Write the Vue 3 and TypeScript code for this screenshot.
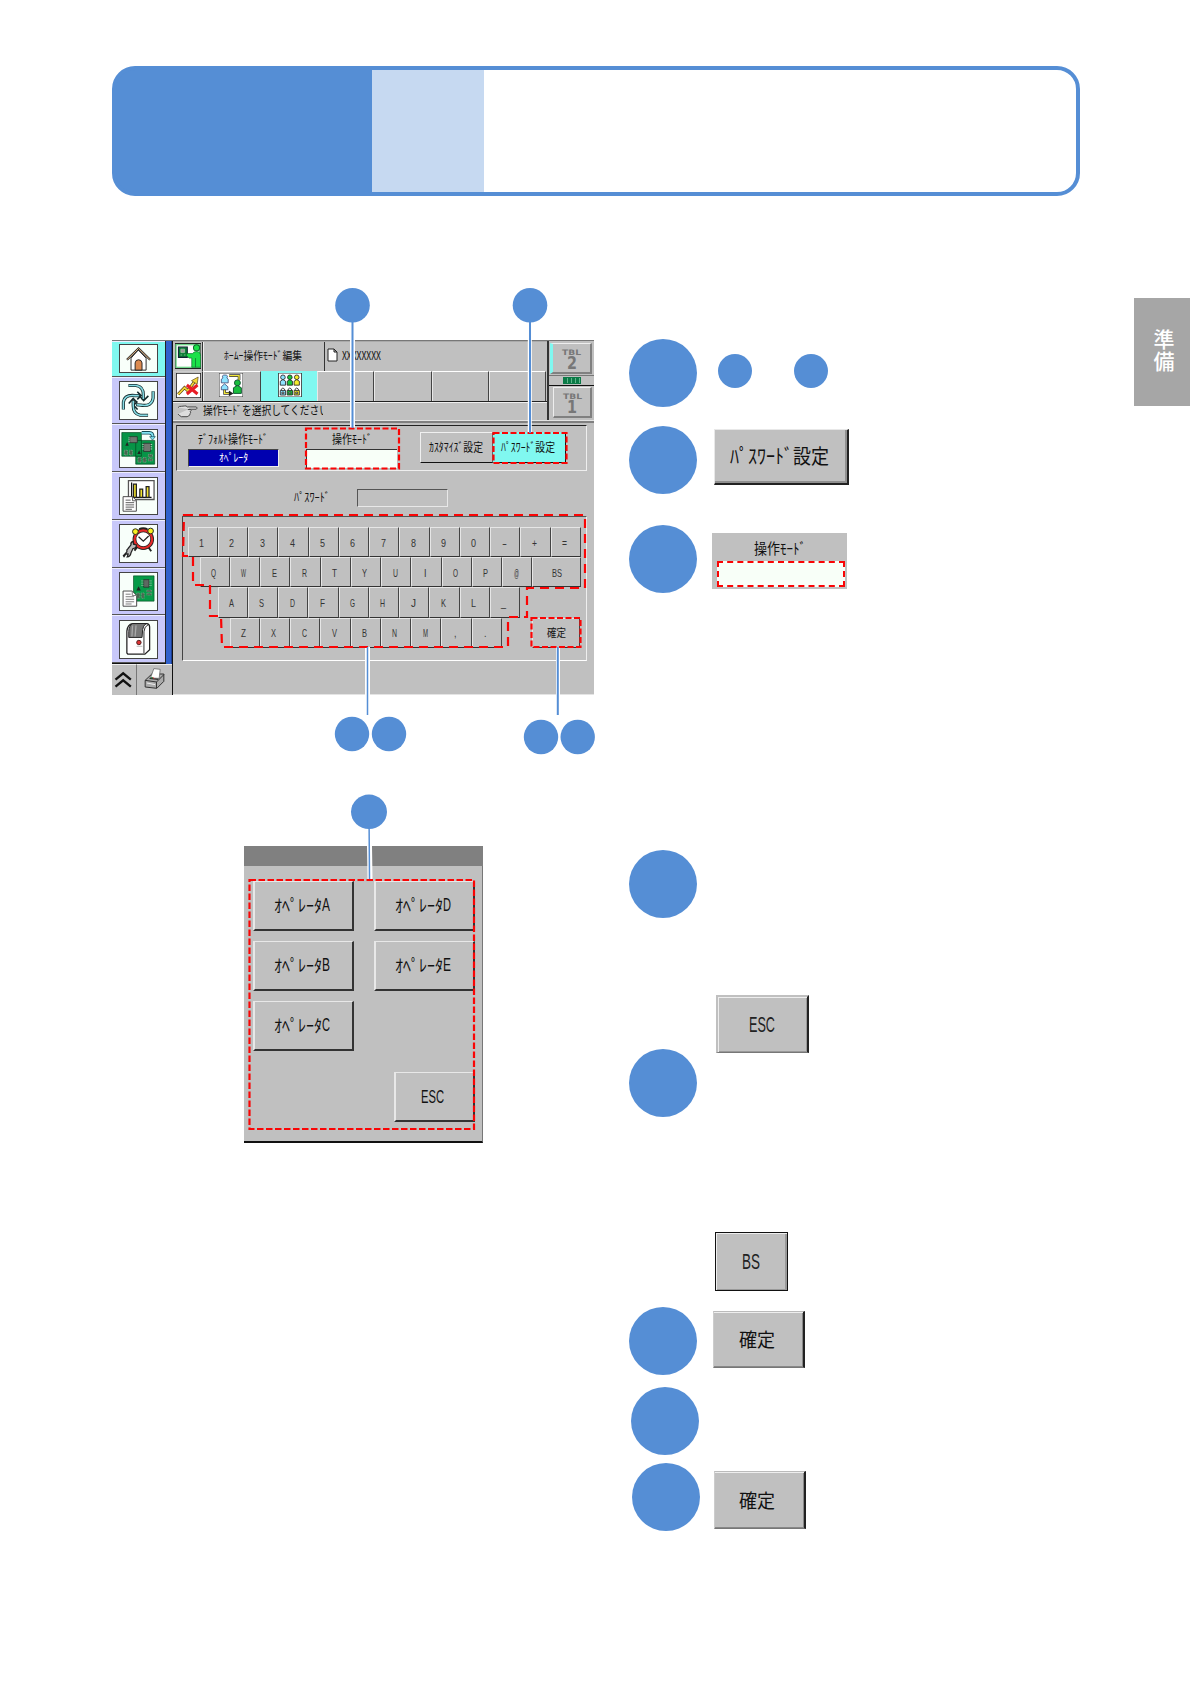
<script setup lang="ts">
import { h } from 'vue'

interface LabelProps {
  text: string
  w: number
  size: number
  color?: string
  family?: string
  weight?: number
}

const JP = '"Noto Sans CJK JP", sans-serif'

const Label = (p: LabelProps) =>
  h('svg', { width: p.w, height: p.size, style: 'display:block;overflow:visible;flex:none' }, [
    h('text', {
      x: 0,
      y: p.size * 0.87,
      textLength: p.w,
      lengthAdjust: 'spacingAndGlyphs',
      'font-size': p.size,
      'font-family': p.family ?? JP,
      'font-weight': p.weight ?? 400,
      fill: p.color ?? '#111',
    }, p.text),
  ])
Label.props = ['text', 'w', 'size', 'color', 'family', 'weight']

const narrow: Record<string, number> = { BS: 10, ',': 2.5, '.': 2.5, I: 2.5 }
const rows: { id: string; keys: string[] }[] = [
  { id: 'r1', keys: ['1', '2', '3', '4', '5', '6', '7', '8', '9', '0', '-', '+', '='] },
  { id: 'r2', keys: ['Q', 'W', 'E', 'R', 'T', 'Y', 'U', 'I', 'O', 'P', '@', 'BS'] },
  { id: 'r3', keys: ['A', 'S', 'D', 'F', 'G', 'H', 'J', 'K', 'L', '_'] },
  { id: 'r4', keys: ['Z', 'X', 'C', 'V', 'B', 'N', 'M', ',', '.'] },
]
const operators = ['A', 'D', 'B', 'E', 'C']
const people = [
  { x: 545, c: '#8fe3ff' },
  { x: 566, c: '#17c53a' },
  { x: 587, c: '#f4ec2c' },
]
</script>

<template>
  <div class="page">
    <header class="banner">
      <div class="banner-b"></div>
    </header>

    <div class="content">
      <section class="figures">
        <div class="screen">
          <div class="side">
            <nav class="menu">
              <div class="cells">
                <div class="cell on first">
                  <svg class="ico short" viewBox="58 42 114 86">
                    <path d="M92 84v38h48V84L115 58z" fill="#fff" stroke="#222" stroke-width="3" />
                    <path d="M79 89l37-36 37 36" fill="none" stroke="#222" stroke-width="7" />
                    <path d="M80 88l36-35 36 35" fill="none" stroke="#f2c08c" stroke-width="3" />
                    <path d="M105 122V99q1-10 11-10t11 10v23z" fill="#dc8a50" stroke="#222" stroke-width="3" />
                  </svg>
                </div>
                <div class="cell">
                  <svg class="ico" viewBox="58 153 114 116">
                    <g fill="none" stroke-linejoin="miter">
                      <g stroke="#12292b" stroke-width="10">
                        <path d="M84 164h24q24 3 23 31v14" /><path d="M162 182v22q-4 28-39 22l-15-1" />
                        <path d="M146 258h-25q-22-5-22-30v-17" /><path d="M68 240v-24q4-24 37-20h14" />
                        <path d="M118 196l14 16 15-15M112 214l-12 13 13 13M85 221l14-16 13 14M112 184l12 12-12 12" stroke-width="5" />
                      </g>
                      <g stroke="#86dce4" stroke-width="5">
                        <path d="M85 164h23q24 3 23 31v12" /><path d="M162 183v21q-4 28-39 22l-13-1" />
                        <path d="M145 258h-24q-22-5-22-30v-15" /><path d="M68 239v-23q4-24 37-20h12" />
                      </g>
                    </g>
                  </svg>
                </div>
                <div class="cell">
                  <svg class="ico" viewBox="58 296 114 116">
                    <path d="M63 304h62v75H63zM107 329h60v75h-60z" fill="#079447" stroke="#03401d" stroke-width="2" />
                    <path d="M88 317h24v19H88zM132 338h22v26h-22z" fill="#6f7770" stroke="#222" stroke-width="2" />
                    <path d="M84 321h4m-4 6h4m-4 6h4m40 9h4m-4 7h4m-4 7h4m22-14h5m-5 7h5m-5 7h5" stroke="#c4d2c4" stroke-width="3" />
                    <path d="M71 360h10v15H71zM87 360h10v15H87zM114 383h10v15h-10zM130 383h10v15h-10zM147 373h13v9h-13zM147 387h13v7h-13z" fill="#47664e" stroke="#b4c7b8" stroke-width="1.5" stroke-dasharray="3 2" />
                    <path d="M80 334l-6 12h11zM118 360l-6 12h11z" fill="#222" />
                    <path d="M126 305h24q11 0 11 14" fill="none" stroke="#124b56" stroke-width="11" />
                    <path d="M126 305h24q11 0 11 14" fill="none" stroke="#82e3f4" stroke-width="6" />
                    <path d="M151 317h18l-9 11z" fill="#82e3f4" stroke="#124b56" stroke-width="2" />
                  </svg>
                </div>
                <div class="cell">
                  <svg class="ico" viewBox="58 440 114 116">
                    <path d="M84 448h81v60H84z" fill="#fff" stroke="#555" stroke-width="4" />
                    <path d="M94 454v47h63" fill="none" stroke="#111" stroke-width="4" />
                    <g fill="#f3e32e" stroke="#222" stroke-width="4">
                      <path d="M100 459h9v42h-9zM120 475h9v26h-9zM140 467h9v34h-9z" />
                    </g>
                    <path d="M67 499h30l12 12v34H67z" fill="#fff" stroke="#444" stroke-width="3" />
                    <path d="M97 499v13h12M75 510h16M75 518h27M75 525h27M75 532h27M75 539h20" fill="none" stroke="#555" stroke-width="3" />
                  </svg>
                </div>
                <div class="cell">
                  <svg class="ico" viewBox="58 43 114 116">
                    <path d="M111 113l-8 11M146 112l10 14" stroke="#222" stroke-width="6" />
                    <path d="M118 56q12-5 26 0" fill="none" stroke="#222" stroke-width="6" />
                    <circle cx="131" cy="88" r="28" fill="#fff" stroke="#222" stroke-width="12" />
                    <circle cx="131" cy="88" r="28" fill="none" stroke="#e72929" stroke-width="7" />
                    <circle cx="106" cy="64" r="9" fill="#f8f020" stroke="#222" stroke-width="3" />
                    <circle cx="154" cy="62" r="9" fill="#f8f020" stroke="#222" stroke-width="3" />
                    <path d="M116 80l15 14 17-16" fill="none" stroke="#222" stroke-width="4" />
                    <path d="M68 140l11-12q-2-7 4-11l9-11q-2-9 7-11l1 9 9 2q1 10-11 12L92 131q-2 12-12 13l3-9-7-1-6 9z" fill="#bdbdbd" stroke="#222" stroke-width="4" />
                  </svg>
                </div>
                <div class="cell">
                  <svg class="ico" viewBox="58 187 114 116">
                    <path d="M100 196h65v80h-65z" fill="#079a48" stroke="#044d22" stroke-width="2" />
                    <path d="M132 208h17v24h-17z" fill="#5d6961" stroke="#222" stroke-width="2" />
                    <path d="M124 212h8m-8 7h8m-8 7h8m17-14h9m-9 7h9m-9 7h9" stroke="#aec1b2" stroke-width="2" />
                    <path d="M116 229l-7 13h14z" fill="#222" />
                    <path d="M110 250h10v17h-10zM125 250h9v17h-9zM142 241h15v6h-15zM142 251h15v6h-15z" fill="#45694f" stroke="#a3bdaa" stroke-width="1.5" stroke-dasharray="3 2" />
                    <path d="M67 244h29l14 14v34H67z" fill="#fff" stroke="#444" stroke-width="3" />
                    <path d="M96 244v14h14M75 254h16M75 262h27M75 270h27M75 278h27M75 285h19" fill="none" stroke="#777" stroke-width="3" />
                  </svg>
                </div>
                <div class="cell">
                  <svg class="ico" viewBox="58 331 114 116">
                    <path d="M79 432V363q2-22 18-24h45q8 0 9 10v73l-15 14H82z" fill="#fff" stroke="#222" stroke-width="4" />
                    <path d="M97 339h43q-10 7-11 19l-2 25H85v-19q1-20 12-25z" fill="#777" stroke="#222" stroke-width="3" />
                    <path d="M97 345l-2 35M108 345l-3 35" stroke="#aaa" stroke-width="4" />
                    <path d="M146 343q-12 5-13 22v68" fill="none" stroke="#222" stroke-width="3" />
                    <circle cx="117" cy="399" r="7" fill="#d33" stroke="#4b2020" stroke-width="3" />
                    <path d="M110 411h18" stroke="#bbb" stroke-width="3" />
                  </svg>
                </div>
              </div>
            </nav>
            <div class="tools">
              <div class="up">
                <svg viewBox="36 468 68 84" width="23" height="28">
                  <path d="M46 512l23-19 23 19M46 533l23-19 23 19" fill="none" stroke="#111" stroke-width="7" />
                </svg>
              </div>
              <div class="print">
                <svg viewBox="108 468 104 84" width="35" height="28">
                  <path d="M132 514l20-19h36v22l-21 21-35-4z" fill="#aaa" stroke="#333" stroke-width="3" />
                  <path d="M132 514l34 5 22-22M166 519v18" fill="none" stroke="#333" stroke-width="3" />
                  <path d="M148 507l10-28 19 2-3 27z" fill="#fff" stroke="#555" stroke-width="2" />
                  <path d="M145 508l26 3" stroke="#333" stroke-width="4" />
                  <path d="M150 506h5" stroke="#0c9b45" stroke-width="4" /><path d="M154 504l5 5" stroke="#e33" stroke-width="3" />
                  <path d="M137 522l25 5" stroke="#eee" stroke-width="3" />
                </svg>
              </div>
            </div>
          </div>

          <div class="main">
            <div class="top">
              <div class="top-left">
                <div class="title-row">
                  <div class="mini">
                    <svg viewBox="223 43 76 74" width="26" height="26">
                      <path d="M223 43h76v74h-76z" fill="#fff" stroke="#222" stroke-width="4" />
                      <path d="M226 47h69v66h-69z" fill="none" stroke="#43c765" stroke-width="3" />
                      <path d="M233 54h26v30h-26z" fill="#087c35" stroke="#123" stroke-width="3" />
                      <path d="M240 60h11v10h-11zM239 77h5M249 77h5" fill="#999" stroke="#aca" stroke-width="2" />
                      <path d="M258 73h16q4-6 12-6 12 0 12 14v32h-26V86h-8l-8-8z" fill="#1be149" stroke="#0a6b2a" stroke-width="2" />
                      <circle cx="286" cy="56" r="9" fill="#1be149" stroke="#0a6b2a" stroke-width="3" />
                      <path d="M283 86v27" stroke="#0a6b2a" stroke-width="2" />
                    </svg>
                  </div>
                  <div class="title"><Label text="ﾎｰﾑｰ操作ﾓｰﾄﾞ編集" :w="78" :size="11" /></div>
                  <div class="file">
                    <svg viewBox="0 0 11 14" width="11" height="14"><path d="M1 1h6l3 3v9H1zM7 1v3h3" fill="#fff" stroke="#222" /></svg>
                    <Label text="XXXXXXXX" :w="39" :size="11.5" />
                  </div>
                </div>
                <div class="tabs">
                  <div class="tab t0">
                    <svg viewBox="226 133 74 75" width="25" height="25">
                      <path d="M226 133h74v75h-74z" fill="#fff" stroke="#222" stroke-width="4" />
                      <path d="M232 197l19-20 10 9 23-31" fill="none" stroke="#543f16" stroke-width="9" />
                      <path d="M232 197l19-20 10 9 23-31" fill="none" stroke="#f4d735" stroke-width="5" />
                      <path d="M272 156l20-11-3 22z" fill="#f4d735" stroke="#543f16" stroke-width="2" />
                      <path d="M258 169l32 27M290 169l-32 27" stroke="#e81c24" stroke-width="9" />
                    </svg>
                  </div>
                  <div class="tab t1">
                    <svg viewBox="356 129 73 73" width="24" height="24">
                      <path d="M356 129h73v73h-73z" fill="#fff" stroke="#333" stroke-width="3" />
                      <path d="M387 137h30v13M373 172v19h17" fill="none" stroke="#333" stroke-width="8" />
                      <path d="M387 137h30v13M373 172v19h17" fill="none" stroke="#f2e637" stroke-width="4" />
                      <path d="M363 159v-11l5-4q-5-9 6-9t6 9l4 4v11z" fill="#8fe3ff" stroke="#225" stroke-width="2" />
                      <path d="M363 180v-9l10-9 10 9v9z" fill="#8fe3ff" stroke="#225" stroke-width="2" />
                      <circle cx="412" cy="159" r="9" fill="#18bd3d" stroke="#153" stroke-width="3" />
                      <path d="M400 191v-17l12-7 12 7v17z" fill="#18bd3d" stroke="#153" stroke-width="3" />
                      <path d="M386 182l14 9-14 9z" fill="#222" />
                    </svg>
                  </div>
                  <div class="tab t2">
                    <svg viewBox="531 129 71 73" width="24" height="24">
                      <path d="M531 129h71v73h-71z" fill="#fff" stroke="#333" stroke-width="3" />
                      <g v-for="p in people" :key="p.x" :fill="p.c" stroke="#222" stroke-width="2.5">
                        <path :d="`M${p.x - 8} 166v-12l8-5 8 5v12z`" />
                        <circle :cx="p.x" cy="142" r="7" />
                        <path :d="`M${p.x - 5} 183v-5q5-7 10 0v5`" fill="none" />
                        <path :d="`M${p.x - 8} 182h16v14h-16z`" />
                        <path :d="`M${p.x - 3} 187h6v5h-6z`" fill="#fff" />
                      </g>
                    </svg>
                  </div>
                  <div class="tab"></div>
                  <div class="tab"></div>
                  <div class="tab"></div>
                  <div class="tab"></div>
                </div>
                <div class="message">
                  <svg viewBox="230 222 64 40" width="21" height="13">
                    <path d="M233 230q3-5 10-4l10-1q5-2 8 3h28q6 3 0 7h-22M263 236h8q5 3-1 7 5 3-1 6 3 3-3 6l-5 3h-18q-8-5-10-8" fill="#ddd" stroke="#444" stroke-width="3" />
                  </svg>
                  <div class="message-text"><Label text="操作ﾓｰﾄﾞを選択してください" :w="126" :size="12" /></div>
                </div>
              </div>
              <div class="tables">
                <div class="tbl active">
                  <Label text="TBL" :w="19" :size="7.5" color="#777" family="DejaVu Sans, sans-serif" :weight="700" />
                  <Label text="2" :w="10" :size="17.5" color="#777" family="DejaVu Sans, sans-serif" :weight="700" />
                </div>
                <div class="link"><span></span></div>
                <div class="tbl">
                  <Label text="TBL" :w="19" :size="7.5" color="#777" family="DejaVu Sans, sans-serif" :weight="700" />
                  <Label text="1" :w="10" :size="17.5" color="#777" family="DejaVu Sans, sans-serif" :weight="700" />
                </div>
              </div>
            </div>

            <div class="panel">
              <div class="modes">
                <div class="mode-default">
                  <Label text="ﾃﾞﾌｫﾙﾄ操作ﾓｰﾄﾞ" :w="70" :size="12" />
                  <div class="value blue"><Label text="ｵﾍﾟﾚｰﾀ" :w="29" :size="11" color="#fff" /></div>
                </div>
                <div class="mode">
                  <Label text="操作ﾓｰﾄﾞ" :w="40" :size="12" />
                  <div class="value white"></div>
                </div>
                <div class="mode-buttons">
                  <div class="btn"><Label text="ｶｽﾀﾏｲｽﾞ設定" :w="54" :size="12" /></div>
                  <div class="btn cyan"><Label text="ﾊﾟｽﾜｰﾄﾞ設定" :w="54" :size="12" /></div>
                </div>
              </div>
              <div class="password">
                <Label text="ﾊﾟｽﾜｰﾄﾞ" :w="36" :size="12" />
                <div class="input"></div>
              </div>
              <div class="keyboard">
                <div v-for="r in rows" :key="r.id" class="krow" :class="r.id">
                  <div v-for="k in r.keys" :key="k" class="key" :class="{ wide: k === 'BS' }">
                    <Label :text="k" :w="narrow[k] ?? 5" :size="11" color="#333" family="Liberation Sans, sans-serif" />
                  </div>
                  <div v-if="r.id === 'r4'" class="key enter"><Label text="確定" :w="19" :size="11" /></div>
                </div>
              </div>
            </div>
          </div>
        </div>

        <div class="dialog">
          <div class="dialog-bar"></div>
          <div class="dialog-body">
            <div v-for="o in operators" :key="o" class="op">
              <Label text="ｵﾍﾟﾚｰﾀ" :w="48" :size="17" />
              <Label :text="o" :w="8" :size="17.5" family="Liberation Sans, sans-serif" />
            </div>
            <div class="op esc"><Label text="ESC" :w="23" :size="18" family="Liberation Sans, sans-serif" /></div>
          </div>
        </div>
      </section>

      <section class="steps">
        <div class="step s1"><i class="big"></i><i class="dot d1"></i><i class="dot d2"></i></div>
        <div class="step s2"><i class="big"></i><div class="raised pass"><Label text="ﾊﾟｽﾜｰﾄﾞ設定" :w="99" :size="20" /></div></div>
        <div class="step s3">
          <i class="big"></i>
          <div class="field"><Label text="操作ﾓｰﾄﾞ" :w="52" :size="15" /><div class="field-box"></div></div>
        </div>
        <div class="step s4"><i class="big"></i></div>
        <div class="only e1"><div class="raised esc2"><Label text="ESC" :w="26" :size="22" color="#222" family="Liberation Sans, sans-serif" /></div></div>
        <div class="step s5"><i class="big"></i></div>
        <div class="only e2"><div class="raised bs"><Label text="BS" :w="18" :size="22" color="#222" family="Liberation Sans, sans-serif" /></div></div>
        <div class="step s6"><i class="big"></i><div class="raised ok"><Label text="確定" :w="36" :size="19" /></div></div>
        <div class="step s7"><i class="big"></i></div>
        <div class="step s8"><i class="big"></i><div class="raised ok"><Label text="確定" :w="36" :size="19" /></div></div>
      </section>

      <aside class="chapter"><span>準</span><span>備</span></aside>
    </div>

    <!-- callouts drawn over the figures -->
    <svg class="callouts" width="1190" height="1684" viewBox="0 0 1190 1684">
      <g fill="#fff">
        <path d="M350 340h5v88h-5zM527.8 340h4v93h-4zM365 647h5v48h-5zM556 647h4v48h-4zM367 846h5l0.5 33h-5z" />
      </g>
      <g fill="none" stroke="#fa0505" stroke-width="2.2">
        <path d="M306 428.500h93v40h-93z" stroke-dasharray="6 2.500" />
        <path d="M493.500 433h73v30h-73z" stroke-dasharray="6 2.500" />
        <path d="M531.500 618h49v29h-49z" stroke-dasharray="6 2.500" />
        <path d="M184 515h401v73h-58v29h-19v30H222l-1-31h-11v-31h-17v-29h-10z" stroke-dasharray="9 6" />
        <path d="M249.500 880h224.500v249H249.500z" stroke-dasharray="6.500 2.500" />
      </g>
      <g stroke="#558ed5" stroke-width="2">
        <path d="M352.500 305v123M530 305v128M557.800 647v68" /><path d="M367.500 647v68M369 812l0.500 67" stroke-width="1.500" />
      </g>
      <g fill="#558ed5">
        <circle cx="352.500" cy="305.300" r="17.300" /><circle cx="530" cy="305.300" r="17.300" />
        <circle cx="352" cy="734" r="17.200" /><circle cx="389" cy="734" r="17.200" />
        <circle cx="541" cy="737" r="17.200" /><circle cx="577.700" cy="737" r="17.200" />
        <ellipse cx="369" cy="811.800" rx="18" ry="17.200" />
      </g>
    </svg>
  </div>
</template>

<style>
html, body { margin: 0; background: #fff; }
</style>

<style scoped>
.page { position: relative; width: 1190px; height: 1684px; overflow: hidden; background: #fff; font-family: "Noto Sans CJK JP", sans-serif; }
.page * { box-sizing: border-box; }
.banner { display: flex; width: 968.500px; height: 130px; margin: 65.500px 0 0 111.500px; border: 4px solid #558ed5; border-radius: 23px; padding-left: 256px; background: linear-gradient(90deg, #558ed5 0 260px, #fff 260px) border-box; }
.banner-b { width: 112px; background: #c6d9f1; }

.content { display: flex; align-items: flex-start; margin-top: -0.500px; }
.figures { width: 482px; margin-left: 112px; padding-top: 145px; flex: none; }

.screen { display: flex; width: 482px; height: 355px; background: #c0c0c0; border-top: 1px solid #777; overflow: hidden; }
.side { width: 61px; display: flex; flex-direction: column; flex: none; border-right: 1px solid #111; }
.menu { height: 324px; background: #3060cc; border-right: 1px solid #1c3e90; }
.cells { width: 54px; display: flex; flex-direction: column; border-right: 1px solid #222; border-bottom: 1px solid #111; }
.cell { height: 47.8px; display: flex; align-items: center; padding-left: 7px; background: #c8c8fa; border-bottom: 1.5px solid #555; border-top: 1px solid #eef; }
.cell.first { height: 35.500px; }
.cell.on { background: #80f8f0; }
.ico { width: 38.500px; height: 38.700px; background: #f8fffa; border: 1px solid #444; }
.ico.short { height: 29px; }
.tools { display: flex; flex: 1; }
.up { width: 24.500px; border-right: 1px solid #777; border-top: 1px solid #eee; border-bottom: 1px solid #555; }
.print { flex: 1; border-top: 1px solid #eee; border-bottom: 1px solid #555; }

.main { flex: 1; display: flex; flex-direction: column; }
.top { display: flex; height: 80px; }
.top-left { width: 375.500px; display: flex; flex-direction: column; border-right: 2px solid #333; }
.title-row { display: flex; height: 30px; border-top: 1px solid #aaa; }
.mini { width: 30px; padding: 1px 0 0 2px; border-right: 1px solid #333; }
.title { width: 122px; padding: 8px 0 0 20px; border-left: 1px solid #eee; border-right: 1px solid #333; }
.file { display: flex; gap: 4px; padding: 6px 0 0 2px; }
.file > :last-child { margin-top: 2px; }
.tabs { display: flex; height: 31px; border-bottom: 1.5px solid #222; }
.tab { width: 57.600px; border-top: 1px solid #fff; border-left: 1px solid #e8e8e8; border-right: 1.5px solid #444; }
.t0 { width: 30px; padding: 1px 0 0 2px; border-color: #ccc #333 #ccc #ccc; }
.t1 { width: 58px; padding: 1px 0 0 15px; }
.t2 { width: 56px; padding: 1px 0 0 16px; background: #80f8f0; border-color: #80f8f0; }
.message { display: flex; flex: 1; padding: 2px 0 0 4px; border-top: 1px solid #eee; }
.message-text { width: 120px; height: 15px; margin-left: 5px; overflow: hidden; }
.tables { flex: 1; padding: 2px 3px 0 1.500px; }
.tbl { height: 31px; display: flex; flex-direction: column; align-items: center; padding: 4px 0 0 1px; margin-left: 3px; border: 1px solid #eee; border-right: 2px solid #808080; border-bottom: 2px solid #808080; }
.tbl > :last-child { margin-top: -1.500px; }
.tbl.active { margin-left: 0; border-left: 3.500px solid #80f8f0; }
.link { height: 11px; margin: 1px -3px 1px -1px; display: flex; justify-content: center; align-items: center; border-top: 1.500px solid #777; border-bottom: 1.500px solid #111; }
.link span { width: 18px; height: 7px; background: repeating-linear-gradient(90deg, #0b7a47 0 3px, #5fb58a 3px 4px); border: 1px solid #0b7a47; }

.panel { flex: 1; display: flex; flex-direction: column; padding: 2px 7px 0 3px; border-top: 2px solid #808080; border-right: 1px solid #e4e4e4; border-bottom: 1.500px solid #e4e4e4; box-shadow: 0 -1px #e4e4e4; }
.modes { display: flex; height: 46px; border-top: 1.500px solid #222; border-left: 1.500px solid #444; border-right: 1px solid #eee; border-bottom: 1px solid #eee; }
.mode-default { width: 91px; margin-left: 10.500px; padding-top: 8px; display: flex; flex-direction: column; align-items: center; }
.value { width: 91px; height: 17.500px; margin-top: 3px; display: flex; align-items: center; justify-content: center; }
.blue { background: #0000b0; border: 1px solid #eee; border-top-color: #444; border-left-color: #444; }
.mode { width: 90px; margin-left: 28px; padding-top: 8px; display: flex; flex-direction: column; align-items: center; }
.white { background: #f8fff8; height: 19px; margin-top: 3px; border-top: 1px solid #333; border-left: 1px solid #333; }
.mode-buttons { display: flex; margin-left: 23.500px; padding-top: 6px; }
.btn { width: 73px; height: 31px; display: flex; align-items: center; justify-content: center; padding: 1px 2px 0 0; border-top: 1px solid #f0f0f0; border-left: 1px solid #f0f0f0; border-right: 1.500px solid #666; border-bottom: 1.500px solid #111; }
.btn.cyan { padding-right: 4px; background: #80f8f0; border-color: #80f8f0 #111 #111 #80f8f0; }
.password { display: flex; align-items: center; height: 18px; margin: 18px 0 0 118px; }
.input { width: 91px; height: 18px; margin-left: 27px; border-top: 1.500px solid #555; border-left: 1px solid #555; border-right: 1px solid #e8e8e8; border-bottom: 1px solid #e8e8e8; }
.keyboard { margin: 9px 0 0 5.500px; width: 405px; height: 145px; padding-top: 10px; border-top: 1px solid #555; border-left: 1px solid #444; border-right: 1px solid #eee; border-bottom: 1.500px solid #fff; }
.krow { display: flex; height: 30.200px; }
.r1 { margin-left: 5px; }
.r2 { margin-left: 17px; }
.r3 { margin-left: 35px; }
.r4 { margin-left: 47px; }
.key { width: 30.250px; height: 30.200px; flex: none; display: flex; align-items: center; justify-content: center; padding-right: 2px; border-top: 1px solid #e6e6e6; border-left: 1px solid #e6e6e6; border-right: 1px solid #444; border-bottom: 1px solid #333; }
.key.wide { width: 49px; padding-right: 0; }
.key.enter { width: 48px; margin-left: 30.500px; padding-right: 0; }

.dialog { width: 239px; height: 297px; margin: 151px 0 0 132px; background: #c0c0c0; border-bottom: 2px solid #111; border-right: 1px solid #777; }
.dialog-bar { height: 20px; background: #808080; margin-right: -1px; }
.dialog-body { display: grid; grid-template-columns: 101px 101px; grid-template-rows: 50px 50px 50px 50px; column-gap: 19.500px; row-gap: 10px; padding: 15px 0 0 9px; }
.op { display: flex; align-items: center; justify-content: center; padding: 0 3px 1px 0; border: 2px solid #e8e8e8; border-right-color: #333; border-bottom-color: #333; border-top-width: 1.500px; }
.op.esc { grid-column: 2; grid-row: 4; width: 81px; margin-top: 11px; height: 50px; justify-self: end; }

.steps { width: 300px; margin-left: 35px; padding-top: 144px; flex: none; }
.step { display: flex; align-items: flex-start; height: 68px; }
.big { display: block; width: 68px; height: 68px; border-radius: 50%; background: #558ed5; flex: none; }
.dot { display: block; width: 34px; height: 34px; border-radius: 50%; background: #558ed5; margin-top: 14.500px; }
.d1 { margin-left: 21px; }
.d2 { margin-left: 42px; }
.s2 { margin-top: 19px; }
.s3 { margin-top: 31px; }
.s4 { margin-top: 257px; }
.only { display: flex; }
.e1 { margin: 77px 0 0 87px; height: 58px; }
.s5 { margin-top: -4px; }
.e2 { margin: 115px 0 0 86px; height: 59px; }
.s6 { margin-top: 16px; }
.s7 { margin: 12px 0 0 2px; }
.s8 { margin: 8px 0 0 3px; }
.raised { display: flex; align-items: center; justify-content: center; background: #c0c0c0; border: 1px solid #e8e8e8; border-right: 2px solid #222; border-bottom: 2px solid #222; }
.pass { width: 135px; height: 56px; margin: 3px 0 0 17px; padding: 0 3px 0 0; box-shadow: inset -2px -2px #909090; }
.field { width: 135px; height: 56px; margin: 7.500px 0 0 15px; padding-top: 8px; background: #c0c0c0; display: flex; flex-direction: column; align-items: center; }
.field-box { width: 128px; height: 26px; margin: 5px 0 0 3px; background: #f8fff8; position: relative; }
.field-box::after { content: ""; position: absolute; inset: 0; border: 2px dashed #fa0505; }
.esc2 { width: 93px; height: 58px; padding: 0 2px 2px 0; border: 2px solid #c0c0c0; border-right: 2px solid #222; border-bottom: 1px solid #777; box-shadow: inset 1px 1px #eee, inset -1px -1px #999; }
.bs { width: 73px; height: 59px; padding: 0 2px 1px 0; border: 1.500px solid #111; box-shadow: inset 1px 1px #eee, inset -2px -1px #999; }
.ok { width: 92px; height: 57px; padding-right: 4px; margin: 4px 0 0 16px; border-top: 1px solid #bbb; border-left-color: #ccc; border-bottom: 1px solid #777; box-shadow: inset 0 1px #eee, inset -1px -1px #888; }
.s8 .ok { margin: 8px 0 0 13.500px; height: 58px; }

.chapter { margin: 103px 0 0 auto; width: 56px; height: 108px; background: #a6a6a6; color: #fff; display: flex; flex-direction: column; align-items: center; padding: 29px 0 0 4px; font-size: 21px; line-height: 22px; font-weight: 500; }
.callouts { position: absolute; left: 0; top: 0; pointer-events: none; }
</style>
